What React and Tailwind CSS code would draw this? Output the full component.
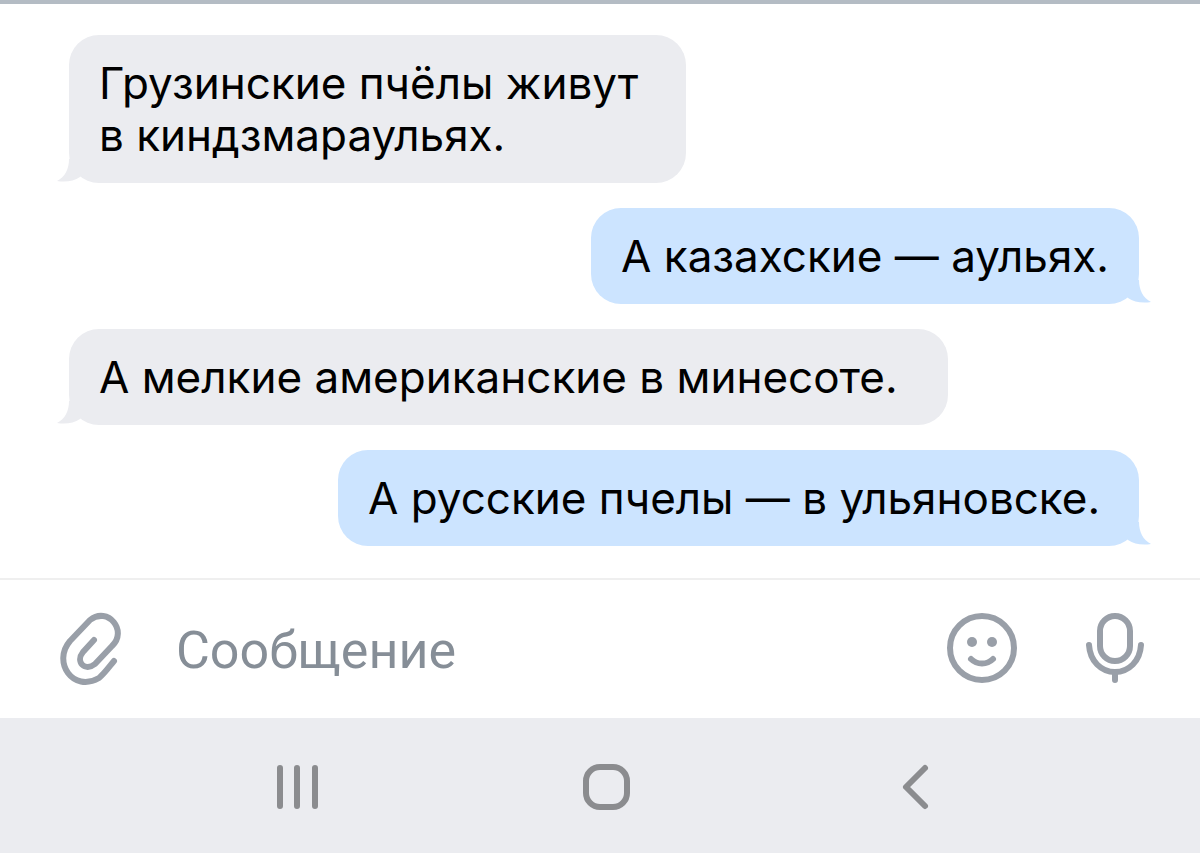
import React from "react";

const messages = [
  { lines: ["Грузинские пчёлы живут", "в киндзмараульях."], mine: false, width: "min-w-[617px]" },
  { lines: ["А казахские — аульях."], mine: true, width: "min-w-[547px]" },
  { lines: ["А мелкие американские в минесоте."], mine: false, width: "min-w-[879px]" },
  { lines: ["А русские пчелы — в ульяновске."], mine: true, width: "min-w-[801px]" },
];

const Tail = ({ mine }) => (
  <svg
    viewBox="0 0 42 24"
    fill="currentColor"
    aria-hidden="true"
    className={
      mine
        ? "absolute bottom-0 -right-3 h-6 w-[42px] -scale-x-100 text-[#cce4ff]"
        : "absolute bottom-0 -left-3 h-6 w-[42px] text-[#ebecf0]"
    }
  >
    <path d="M12 0C12 10 8 18 0 22C9 23.5 17 22 23 18L40 0Z" />
  </svg>
);

const Bubble = ({ message }) => (
  <li
    className={`relative rounded-[30px] px-[30px] py-[22px] ${message.width} ${
      message.mine ? "self-end bg-[#cce4ff]" : "self-start bg-[#ebecf0]"
    }`}
  >
    <Tail mine={message.mine} />
    {message.lines.map((line) => (
      <p key={line} className="relative text-[44px] leading-[52px] text-black">
        {line}
      </p>
    ))}
  </li>
);

const PaperclipIcon = () => (
  <svg viewBox="0 0 64 74" fill="none" stroke="currentColor" strokeWidth="6" strokeLinecap="round" strokeLinejoin="round" className="h-[74px] w-16">
    <path d="M34 28L23 40C15 50 25 60 35 52L52 34C68 19 48 -6 30 8L10 29C-8 50 13 81 39 66C45 61 49 55 54 49" />
  </svg>
);

const SmileIcon = () => (
  <svg viewBox="0 0 72 72" fill="none" stroke="currentColor" strokeWidth="6" strokeLinecap="round" className="size-[72px]">
    <circle cx="36" cy="35" r="32" />
    <circle cx="26" cy="29" r="5" fill="currentColor" stroke="none" />
    <circle cx="46" cy="29" r="5" fill="currentColor" stroke="none" />
    <path d="M25 46C31 52 41 52 47 46" />
  </svg>
);

const MicIcon = () => (
  <svg viewBox="0 0 60 72" fill="none" stroke="currentColor" strokeWidth="6" strokeLinecap="round" className="h-[72px] w-[60px]">
    <rect x="15" y="3" width="30" height="45" rx="15" />
    <path d="M4 32C5 48 16 59 30 59C44 59 55 48 56 32M30 59V67" />
  </svg>
);

const App = () => {
  return (
    <div className="flex min-h-screen flex-col bg-white font-['Inter','Liberation_Sans',sans-serif]">
      <div className="h-1 bg-[#b4bcc4]" />

      {/* Messages */}
      <ul className="flex flex-1 flex-col gap-[25px] pt-[31px] pr-[61px] pb-8 pl-[69px]">
        {messages.map((message, index) => (
          <Bubble key={index} message={message} />
        ))}
      </ul>

      {/* Message input */}
      <form className="flex items-center border-t-2 border-[#efefef] py-8 pr-[55px] pl-[60px] text-[#999fa8]">
        <button type="button" aria-label="Прикрепить">
          <PaperclipIcon />
        </button>
        <input
          type="text"
          aria-label="Сообщение"
          placeholder="Сообщение"
          className="ml-[52px] min-w-0 flex-1 pt-1 font-['Roboto',sans-serif] text-[52px] leading-[60px] text-black outline-none placeholder:text-[#868e97]"
        />
        <button type="button" aria-label="Смайлики">
          <SmileIcon />
        </button>
        <button type="button" aria-label="Голосовое сообщение" className="ml-[67px]">
          <MicIcon />
        </button>
      </form>

      {/* System navigation */}
      <nav className="flex h-[136px] items-center justify-around bg-[#ebecf0] pt-0.5 pr-[131px] pl-[143px] text-[#8b8c8f]">
        <button type="button" aria-label="Недавние">
          <svg viewBox="0 0 48 48" fill="none" stroke="currentColor" strokeWidth="6" strokeLinecap="round" className="size-12">
            <path d="M7 5V43M24 5V43M42 5V43" />
          </svg>
        </button>
        <button type="button" aria-label="Домой">
          <svg viewBox="0 0 48 48" fill="none" stroke="currentColor" strokeWidth="6" className="size-12">
            <rect x="4" y="4" width="41" height="40" rx="14" />
          </svg>
        </button>
        <button type="button" aria-label="Назад">
          <svg viewBox="0 0 48 48" fill="none" stroke="currentColor" strokeWidth="6" strokeLinecap="round" strokeLinejoin="round" className="size-12">
            <path d="M34 5L15 24L34 43" />
          </svg>
        </button>
      </nav>
    </div>
  );
};

export default App;
